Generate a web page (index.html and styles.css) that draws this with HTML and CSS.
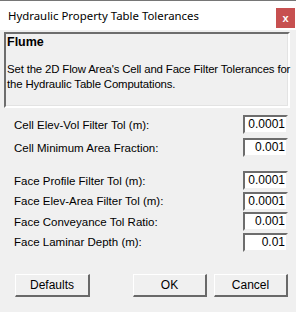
FILE: index.html
```html
<!DOCTYPE html>
<html>
<head>
<meta charset="utf-8">
<link rel="stylesheet" href="styles.css">
</head>
<body>
<div class="window">
  <div class="titlebar">
    <span class="title">Hydraulic Property Table Tolerances</span>
    <span class="close">x</span>
  </div>
  <div class="content">
    <div class="panel">
      <div class="panel-head">Flume</div>
      <div class="panel-desc">Set the 2D Flow Area's Cell and Face Filter Tolerances for<br>the Hydraulic Table Computations.</div>
    </div>
    <div class="group group-cell">
      <div class="row"><span class="label">Cell Elev-Vol Filter Tol (m):</span><span class="field">0.0001</span></div>
      <div class="row"><span class="label">Cell Minimum Area Fraction:</span><span class="field">0.001</span></div>
    </div>
    <div class="group group-face">
      <div class="row"><span class="label">Face Profile Filter Tol (m):</span><span class="field">0.0001</span></div>
      <div class="row"><span class="label">Face Elev-Area Filter Tol (m):</span><span class="field">0.0001</span></div>
      <div class="row"><span class="label">Face Conveyance Tol Ratio:</span><span class="field">0.001</span></div>
      <div class="row"><span class="label">Face Laminar Depth (m):</span><span class="field">0.01</span></div>
    </div>
    <div class="buttons">
      <span class="btn btn-defaults">Defaults</span>
      <span class="spacer"></span>
      <span class="btn">OK</span>
      <span class="btn">Cancel</span>
    </div>
  </div>
</div>
</body>
</html>
```

FILE: styles.css
```css
html, body {
  margin: 0;
  padding: 0;
  background: #f0f0f0;
}
body {
  width: 296px;
  height: 312px;
  overflow: hidden;
  font-family: "Liberation Sans", Arial, sans-serif;
  font-size: 11.5px;
  color: #000;
}
.window {
  border-top: 1px solid #767676;
  height: 311px;
  display: flex;
  flex-direction: column;
}
.titlebar {
  height: 29px;
  background: #fff;
  display: flex;
  align-items: flex-start;
  padding-left: 8px;
}
.title {
  font-family: "Noto Sans", sans-serif;
  font-size: 11.4px;
  margin-top: 7px;
  color: #000;
}
.close {
  margin-left: auto;
  margin-right: 1px;
  margin-top: 7px;
  width: 19px;
  height: 20px;
  background: #c75050;
  color: #fff;
  font-family: "Liberation Sans", sans-serif;
  font-weight: bold;
  font-size: 11px;
  display: flex;
  align-items: center;
  justify-content: center;
  line-height: 1;
}
.content {
  padding: 2px 6px 0 4px;
  display: flex;
  flex-direction: column;
}
.panel {
  height: 76px;
  box-sizing: border-box;
  border-style: solid;
  border-width: 2px;
  border-color: #6d6d6d #fff #fff #6d6d6d;
  box-shadow: inset -1px -1px 0 #e3e3e3;
  padding: 1px 0 0 1px;
}
.panel-head {
  font-weight: bold;
  font-size: 12.5px;
  line-height: 15px;
}
.panel-desc {
  margin-top: 12px;
  line-height: 15px;
  font-size: 11.4px;
  letter-spacing: -0.15px;
  white-space: nowrap;
}
.group {
  padding-left: 10px;
  padding-right: 2px;
  display: flex;
  flex-direction: column;
}
.group-cell {
  margin-top: 7px;
  gap: 4px;
}
.group-face {
  margin-top: 14px;
  gap: 1.5px;
}
.row {
  display: flex;
  align-items: center;
  justify-content: space-between;
}
.field {
  width: 45px;
  height: 19px;
  box-sizing: border-box;
  background: #fff;
  border-style: solid;
  border-width: 2px;
  border-color: #6d6d6d #f0f0f0 #f0f0f0 #6d6d6d;
  text-align: right;
  padding-right: 1px;
  line-height: 15px;
  font-size: 12px;
}
.buttons {
  display: flex;
  margin-top: 22px;
  padding-left: 11px;
  padding-right: 2px;
  gap: 7px;
}
.spacer {
  flex: 1;
}
.btn {
  width: 74px;
  height: 23px;
  box-sizing: border-box;
  background: #f0f0f0;
  border-style: solid;
  border-width: 1px 2px 2px 1px;
  border-color: #fff #696969 #696969 #fff;
  display: flex;
  align-items: center;
  justify-content: center;
  font-size: 12px;
}
.btn-defaults {
  width: 75px;
}
```
